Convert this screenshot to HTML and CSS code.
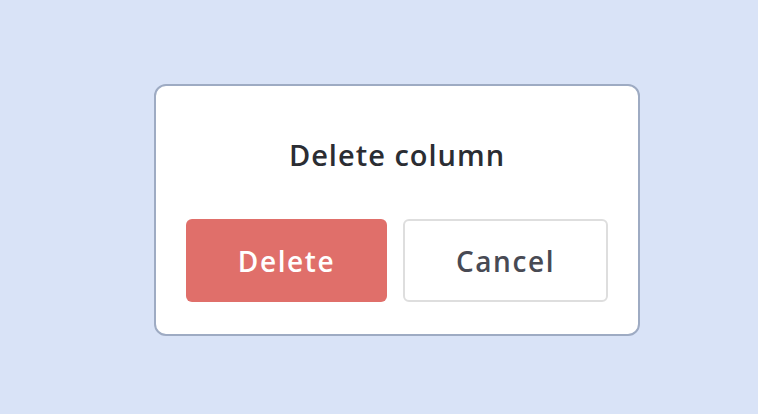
FILE: index.html
```html
<!DOCTYPE html>
<html>
<head>
<meta charset="utf-8">
<link rel="stylesheet" href="styles.css">
</head>
<body>
<div class="stage">
  <div class="dialog">
    <h1 class="title">Delete column</h1>
    <div class="actions">
      <button class="btn btn-danger">Delete</button>
      <button class="btn btn-cancel">Cancel</button>
    </div>
  </div>
</div>
</body>
</html>
```
FILE: styles.css
```css
html, body {
  margin: 0;
  padding: 0;
  background: #d9e3f7;
  font-family: "Open Sans", "Noto Sans", sans-serif;
}
.stage {
  width: 758px;
  height: 414px;
  padding-top: 84px;
  padding-left: 154px;
  box-sizing: border-box;
}
.dialog {
  width: 486px;
  height: 252px;
  box-sizing: border-box;
  background: #ffffff;
  border: 2px solid #9eabc3;
  border-radius: 12px;
  padding: 50px 30px 32px 30px;
  display: flex;
  flex-direction: column;
}
.title {
  margin: 0;
  font-size: 29px;
  line-height: 38px;
  font-weight: 600;
  color: #2b2d33;
  text-align: center;
  letter-spacing: 1px;
}
.actions {
  margin-top: auto;
  display: flex;
  gap: 16px;
}
.btn {
  height: 83px;
  border-radius: 6px;
  font-family: inherit;
  font-size: 28px;
  font-weight: 600;
  letter-spacing: 1.6px;
  cursor: pointer;
  box-sizing: border-box;
}
.btn-danger {
  width: 201px;
  background: #e06f6a;
  color: #ffffff;
  border: none;
}
.btn-cancel {
  width: 205px;
  background: #ffffff;
  color: #484a54;
  border: 2px solid #dedede;
}
```
